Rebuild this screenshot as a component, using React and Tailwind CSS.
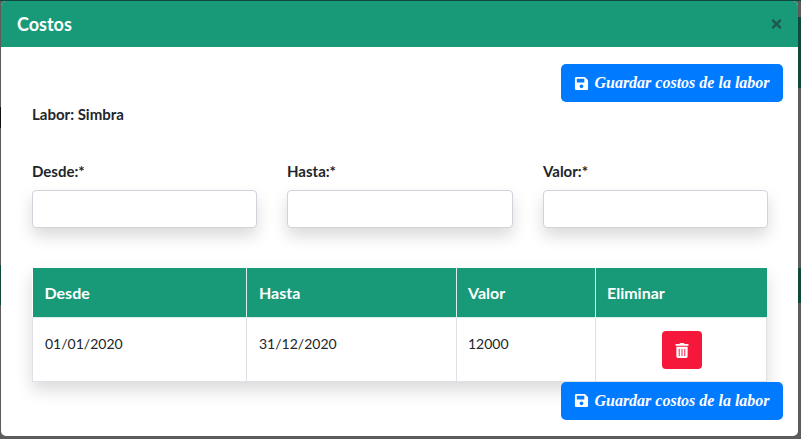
import React from 'react';
import { FaSave, FaTimes, FaTrashAlt } from 'react-icons/fa';

const SaveButton = () => (
  <div className="flex justify-end">
    <button className="flex h-[38px] w-[222px] items-center justify-center gap-[5px] rounded-[5px] bg-[#007bff] text-[16px] font-bold text-white font-['Liberation_Serif',serif] italic">
      <FaSave className="h-[15px] w-[15px]" />
      Guardar costos de la labor
    </button>
  </div>
);

const Field = ({ label, width }) => (
  <div className={`flex flex-col ${width}`}>
    <label className="mb-[9px] text-[15px] leading-[19px] font-bold text-[#212529]">{label}</label>
    <input className="h-[38px] w-full rounded-[4px] border border-[#ced4da] bg-white shadow-[0_8px_16px_rgba(0,0,0,0.15)]" />
  </div>
);

export default function App() {
  return (
    <div className="relative h-[439px] w-[801px] overflow-hidden bg-[#5c5c5c] pl-[1px] pt-[1px] font-['Lato',sans-serif]">
      {/* Page behind the modal, only its edges show */}
      <div className="absolute left-0 top-0 h-[1px] w-full bg-[#0e4a3c]" />
      <div className="absolute left-0 top-[107px] h-[21px] w-[1px] bg-[#111111]" />
      <div className="absolute left-0 top-[265px] h-[40px] w-[1px] bg-[#0e4a3c]" />
      <div className="absolute right-0 top-[17px] h-[71px] w-[3px] bg-[#0e4a3c]" />
      <div className="absolute right-0 top-[268px] h-[35px] w-[3px] bg-[#0e4a3c]" />

      <div className="relative h-[435px] w-[797px] overflow-hidden rounded-[5px] bg-white">
        {/* Header */}
        <div className="flex h-[46px] items-center justify-between bg-[#189a78] pl-[16px] pr-[15px]">
          <h5 className="text-[18px] font-bold text-white">Costos</h5>
          <FaTimes className="h-[14px] w-[13px] text-[#1f5a4a]" />
        </div>

        {/* Body */}
        <div className="pl-[31px] pr-[15px] pt-[17px]">
          <SaveButton />
          <p className="mt-[3px] text-[15px] leading-[18px] font-bold text-[#212529]">Labor: Simbra</p>

          <div className="mt-[39px] flex w-[736px] justify-between">
            <Field label="Desde:*" width="w-[225px]" />
            <Field label="Hasta:*" width="w-[226px]" />
            <Field label="Valor:*" width="w-[225px]" />
          </div>

          <table className="mt-[40px] w-[735px] table-fixed border-collapse bg-white shadow-[0_8px_16px_rgba(0,0,0,0.15)]">
            <thead>
              <tr className="h-[49px] bg-[#189a78] text-left text-[16px] font-bold text-white">
                <th className="w-[214px] border-r border-[#d9eee8] pl-[12px] pt-[2px]">Desde</th>
                <th className="w-[210px] border-r border-[#d9eee8] pl-[12px] pt-[2px]">Hasta</th>
                <th className="w-[139px] border-r border-[#d9eee8] pl-[11px] pt-[2px]">Valor</th>
                <th className="pl-[11px] pt-[2px]">Eliminar</th>
              </tr>
            </thead>
            <tbody>
              <tr className="h-[64px] border-t border-[#d9eee8] text-[14px] text-[#212529]">
                <td className="border-r border-l border-b border-[#dee2e6] pb-[12px] pl-[12px]">01/01/2020</td>
                <td className="border-r border-b border-[#dee2e6] pb-[12px] pl-[12px]">31/12/2020</td>
                <td className="border-r border-b border-[#dee2e6] pb-[12px] pl-[11px]">12000</td>
                <td className="border-r border-b border-[#dee2e6] pl-[2px] pt-[2px]">
                  <button className="mx-auto flex h-[38px] w-[40px] items-center justify-center rounded-[4px] bg-[#f5183a] text-white">
                    <FaTrashAlt className="h-[15px] w-[14px]" />
                  </button>
                </td>
              </tr>
            </tbody>
          </table>

          <SaveButton />
        </div>
      </div>
    </div>
  );
}
